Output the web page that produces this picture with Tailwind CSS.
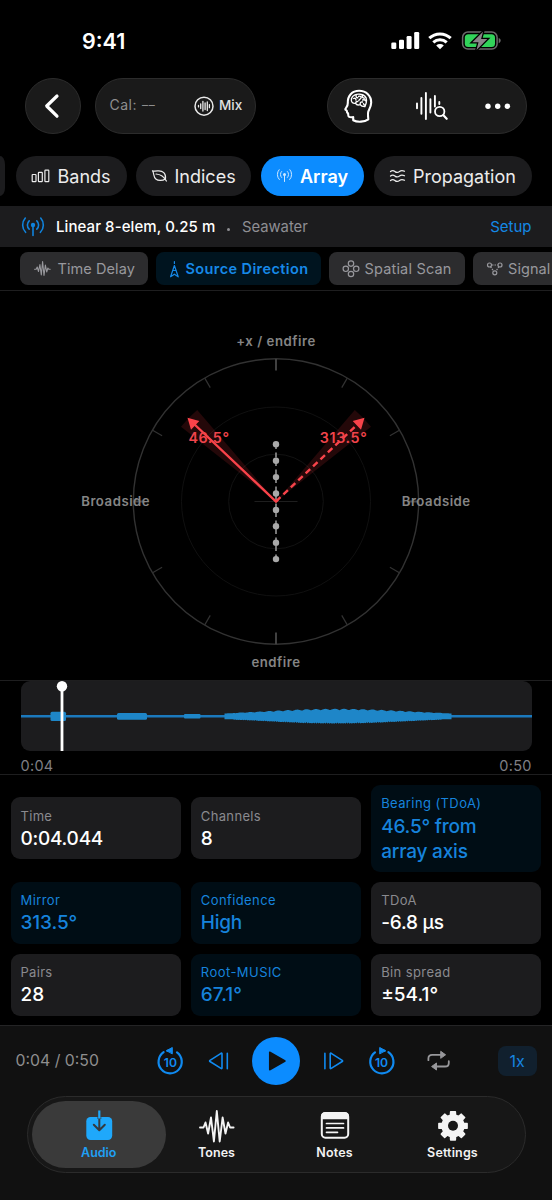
<!DOCTYPE html>
<html lang="en">
<head>
<meta charset="utf-8">
<title>Array analysis</title>
<script src="https://cdn.jsdelivr.net/npm/@tailwindcss/browser@4"></script>
</head>
<body class="bg-black">
<div class="w-[552px] h-[1200px] bg-black overflow-hidden flex flex-col font-['Inter',sans-serif] text-white whitespace-nowrap">

  <!-- Status bar -->
  <div class="h-[78px] shrink-0 flex items-start justify-between pl-[82px] pr-[50px]">
    <span class="mt-[27px] text-[21.5px] leading-7 font-semibold">9:41</span>
    <svg class="mt-[28px]" width="112" height="26" viewBox="390 28 112 26">
      <g fill="#fff">
        <rect x="391.3" y="42.5" width="5" height="6.5" rx="1.3"/><rect x="399" y="39.8" width="5" height="9.2" rx="1.3"/><rect x="406.6" y="36" width="5" height="13" rx="1.3"/><rect x="414.2" y="32" width="5" height="17" rx="1.3"/>
        <path d="M440 49.3l-3.8-3.8a5.6 5.6 0 0 1 7.6 0z"/>
      </g>
      <g fill="none" stroke="#fff" stroke-width="3">
        <path d="M433.3 42.3a9.8 9.8 0 0 1 13.4 0"/><path d="M429.3 38.2a15.5 15.5 0 0 1 21.4 0"/>
      </g>
      <rect x="462.6" y="32.1" width="34.5" height="17" rx="5.3" fill="none" stroke="#6b6b6b" stroke-width="1.5"/>
      <path d="M498.7 38v5.2c1.3-.5 2-1.4 2-2.6s-.7-2.1-2-2.6z" fill="#6b6b6b"/>
      <rect x="464.8" y="34.3" width="30.2" height="12.7" rx="3.5" fill="#32d35a"/>
      <path d="M483 31.7l-10.6 10.6h6.1l-2 7.6 10.8-10.8h-6.2z" fill="#8a8489" stroke="#000" stroke-width="2.6" paint-order="stroke"/>
    </svg>
  </div>

  <!-- Header -->
  <div class="h-[56px] shrink-0 flex pl-[25px]">
    <div class="w-[56px] h-[56px] rounded-full bg-[#1a1a1a] border border-[#2c2c2c] flex items-center justify-center">
      <svg width="18" height="28" viewBox="43.500 92 18 28"><path d="M56.5 96L46.2 106l10.3 10.2" fill="none" stroke="#fff" stroke-width="3.2" stroke-linecap="round" stroke-linejoin="round"/></svg>
    </div>
    <div class="ml-[14px] w-[161px] h-[56px] rounded-full bg-[#1a1a1a] border border-[#2c2c2c] flex items-center pl-[13.5px]">
      <span class="w-[84px] h-5 flex items-center text-[14px] leading-5 -mt-0.5 text-[#8e8e8e] tracking-[0.5px]">Cal:<span class="ml-[5px] text-[12px] tracking-[0.800px]">––</span></span>
      <svg width="20" height="20" viewBox="194 95.500 20 20" fill="none" stroke="#e9e9e9" stroke-linecap="round">
        <circle cx="204" cy="105.700" r="9" stroke-width="1.500"/>
        <path stroke-width="1.300" d="M198.500 105v1.400M200.700 103.300v4.800M202.900 100.800v9.800M205.100 102.500v6.600M207.300 101.300v8.800M209.400 104.200v3"/>
      </svg>
      <span class="ml-[5.500px] -mt-0.5 text-[13.500px] font-medium text-[#e0e0e0]">Mix</span>
    </div>
    <div class="ml-[71px] w-[200px] h-[56px] rounded-full bg-[#1a1a1a] border border-[#2c2c2c]">
      <svg width="198" height="54" viewBox="328 79 198 54" fill="none" stroke="#fff" stroke-linecap="round" stroke-linejoin="round">
        <path stroke-width="2.100" d="M353.200 120.300v-3.200c-1.300.2-3.100.3-4.100-.2-1.400-.7-.6-2.200-1-3.300-.3-.8-1.200-.8-1.100-1.700.1-.8-.1-1.200-.8-1.700-1.100-.6-1.100-1.200-.3-2.100 1.300-1.500 2-3 1.900-5.100-.3-7.300 4.200-12.200 11.300-12.200 7.300 0 12.100 5 12.100 11.700 0 3.600-1.400 6-2.700 8.500-.6 1.200-.4 6.500-.2 8.400-3.800 2.600-10.700 3.100-15.100.9z"/>
        <path stroke-width="1.400" d="M351.500 98.500c1-3.300 5.200-4.900 9-4.200 3.300.5 5.900 2.600 6 6 .1 2.300-.5 4-1.600 6.300-2.100.1-3.700-.5-4.800-2-1.800.7-3.700.2-4.500-1.300-2.500.4-5-.7-4.100-4.800zM353.600 98.500c1.500-.8 2.600.2 2.300 1.500M356.200 95.300c-.4 1.500.2 2.300 1.500 2.500M358.600 96.400c1.800-.8 3 .5 2.300 1.900-.5 1-2 1.200-2.100 2.400M362.300 95.800c-.3 1.400.7 2.200 2 2.400M360.300 104.300c-.6-1.500.6-2.700 2.200-2.300M362.700 100c1.200-.4 2.600.1 3.100.9M355.700 103.200c0-1.200.9-1.800 1.800-1.700M363.500 103.700c.2.800.8 1.500 1.400 1.700"/>
        <path stroke-width="1.900" d="M417 103.500v4.800M421.400 98v15.800M425.900 93v26M430.400 99.200v13.400M434.900 96v10.500M439.300 102v2"/>
        <circle cx="439.700" cy="111.500" r="4.700" stroke-width="1.800"/><path stroke-width="2.200" d="M443.400 115.300l3.300 3.500"/>
        <g fill="#fff" stroke="none"><circle cx="488" cy="106.200" r="2.700"/><circle cx="497.700" cy="106.200" r="2.700"/><circle cx="507.400" cy="106.200" r="2.700"/></g>
      </svg>
    </div>
  </div>

  <!-- Mode tabs -->
  <div class="mt-[22px] h-[40px] shrink-0 flex text-[18px] text-[#ececec]">
    <div class="w-[5px] h-[40px] bg-[#1c1c1e] rounded-r-[12px_50%]"></div>
    <div class="ml-[10.500px] w-[111px] rounded-full bg-[#1c1c1e] flex items-center pl-[15px]">
      <svg width="20" height="16" viewBox="31 168.500 20 16" fill="none" stroke="#ececec" stroke-width="1.200"><rect x="32.200" y="175" width="3.800" height="7.200" rx=".6"/><rect x="38.400" y="172.800" width="3.900" height="9.400" rx=".6"/><rect x="44.900" y="170.700" width="3.900" height="11.500" rx=".6"/></svg>
      <span class="ml-[7px]">Bands</span>
    </div>
    <div class="ml-[9.500px] w-[115px] rounded-full bg-[#1c1c1e] flex items-center pl-[15px]">
      <svg width="18" height="16" viewBox="151 168.500 18 16" fill="none" stroke="#ececec" stroke-width="1.200" stroke-linecap="round" stroke-linejoin="round"><path d="M152.500 171.300c1.500.4 3 .3 5 .1 5.500-.6 8.600 2.600 8 7.800-3 2.300-7.300 2.300-9.700.3-2.500-2.100-1.400-5.100-3.300-8.200zM156 174.500c3.700.3 7.700 2 10.400 7"/></svg>
      <span class="ml-[5.500px]">Indices</span>
    </div>
    <div class="ml-[10px] w-[103px] rounded-full bg-[#0c8cff] flex items-center pl-[15px] text-white font-semibold">
      <svg width="17" height="16" viewBox="276 168.500 17 16" fill="none" stroke="#fff" stroke-width="1" stroke-linecap="round" opacity=".8"><circle cx="284.500" cy="175" r="1.500" fill="#fff" stroke="none"/><path d="M284.500 175v7M281.600 178a4.200 4.200 0 0 1 0-6M287.400 178a4.200 4.200 0 0 0 0-6M279.300 180a7.200 7.200 0 0 1-.2-9.800M289.700 180a7.200 7.200 0 0 0 .2-9.800"/></svg>
      <span class="ml-[7px]">Array</span>
    </div>
    <div class="ml-[10px] w-[158px] rounded-full bg-[#1c1c1e] flex items-center pl-[15px]">
      <svg width="17" height="16" viewBox="389 168.500 17 16" fill="none" stroke="#ececec" stroke-width="1.200" stroke-linecap="round"><path d="M390.500 172c1.500-1.300 3-1.300 4.400 0s3 1.300 4.600 0 3-1.300 5-.2M390.500 176.500c1.500-1.300 3-1.300 4.400 0s3 1.300 4.600 0 3-1.300 5-.2M390.500 181c1.500-1.300 3-1.300 4.400 0s3 1.300 4.600 0 3-1.300 5-.2"/></svg>
      <span class="ml-[7px]">Propagation</span>
    </div>
  </div>

  <!-- Array setup -->
  <div class="mt-[10px] h-[41px] shrink-0 bg-[#1c1c1e] flex items-center pl-[21px] pr-[20.500px] text-[15px] pt-px">
    <svg width="24" height="24" viewBox="21 215 24 24" fill="none" stroke="#1083dc" stroke-width="1.600" stroke-linecap="round"><circle cx="33" cy="225" r="2.200" fill="#1083dc" stroke="none"/><path d="M33 226v9.500M29.200 229.200a5.800 5.800 0 0 1 0-8.400M36.800 229.200a5.800 5.800 0 0 0 0-8.400M25.600 232.300a10.600 10.600 0 0 1-.3-14.300M40.400 232.300a10.600 10.600 0 0 0 .3-14.300"/></svg>
    <span class="ml-[11px] font-medium tracking-[0.080px]">Linear 8-elem, 0.25 m</span>
    <span class="ml-[12px] size-[3px] rounded-full bg-[#8e8e93] mt-1"></span>
    <span class="ml-[11.500px] text-[14.800px] text-[#8e8e93]">Seawater</span>
    <span class="ml-auto text-[#1489e6]">Setup</span>
  </div>

  <!-- Analysis tabs -->
  <div class="h-[44px] shrink-0 border-b border-[#1e1e1f] flex items-start pt-[5px] pl-[20px] gap-[8px] text-[14.500px] text-[#98989d] tracking-[0.080px]">
    <div class="shrink-0 w-[128px] h-[33px] rounded-[8px] bg-[#2c2c2e] flex items-center pl-[14px]">
      <svg width="17" height="18" viewBox="34 260 17 18" fill="none" stroke="#98989d" stroke-width="1.100" stroke-linecap="round" stroke-linejoin="round"><path d="M34.600 269.200h1.600l1-2.200 1.300 4.500 1.400-7 1.400 10.500 1.300-13.500 1.400 14 1.400-10.500 1.300 7 1.200-4 .8 1.200h1.500"/></svg>
      <span class="ml-[6.500px]">Time Delay</span>
    </div>
    <div class="shrink-0 w-[165px] h-[33px] rounded-[8px] bg-[#00141f] flex items-center pl-[13px] text-[#1689e8] font-semibold tracking-[0.400px]">
      <svg width="11" height="18" viewBox="169 260 11 18" fill="none" stroke="#1689e8" stroke-width="1.200" stroke-linecap="round" stroke-linejoin="round"><path d="M174.400 261.500v2M174.400 265.500l-3.800 11.300 3.800-2.600 3.800 2.600zM172.900 270.500h3"/></svg>
      <span class="ml-[5.500px]">Source Direction</span>
    </div>
    <div class="shrink-0 w-[136px] h-[33px] rounded-[8px] bg-[#2c2c2e] flex items-center pl-[12.500px]">
      <svg width="18" height="18" viewBox="341 260 18 18" fill="none" stroke="#98989d" stroke-width="1.200"><circle cx="350" cy="263.600" r="2.700"/><circle cx="350" cy="274" r="2.700"/><circle cx="344.800" cy="268.800" r="2.700"/><circle cx="355.200" cy="268.800" r="2.700"/></svg>
      <span class="ml-[5px] tracking-[0.180px]">Spatial Scan</span>
    </div>
    <div class="shrink-0 w-[120px] h-[33px] rounded-[8px] bg-[#2c2c2e] flex items-center pl-[12.500px]">
      <svg width="17" height="16" viewBox="485 261 17 16" fill="none" stroke="#98989d" stroke-width="1.200"><circle cx="488.500" cy="265" r="2"/><circle cx="499" cy="265" r="2"/><circle cx="493.800" cy="272.800" r="2"/><path d="M491 265h5.500M489.600 266.800l3 4.300M497.900 266.800l-3 4.300" stroke-dasharray="1.500 1"/></svg>
      <span class="ml-[5.500px]">Signal</span>
    </div>
  </div>

  <!-- Direction plot -->
  <div class="h-[390px] shrink-0 border-b border-[#1e1e1f]">
  <svg class="block" width="552" height="389" viewBox="0 291 552 389" font-family="Inter, sans-serif">
    <g fill="none" stroke="#323232" stroke-width="1.400">
      <circle cx="276" cy="501.500" r="142.700"/>
      <circle cx="276" cy="501.500" r="94.500" stroke="#101010" stroke-width="1"/>
      <circle cx="276" cy="501.500" r="47.300" stroke="#121212" stroke-width="1"/>
      <path stroke="#1e1e1e" stroke-width="1" d="M254.500 501.500h43"/>
      <path stroke-width="1.900" stroke="#444" d="M276 359v11.500M276 644v-11.500M133.500 501.500H145M418.500 501.500H407"/>
      <path id="ticks" stroke-width="1.200"/>
    </g>
    <g font-size="13.200" font-weight="600" fill="#858585" text-anchor="middle" letter-spacing=".52">
      <text x="276" y="346">+x / endfire</text><text x="276" y="667">endfire</text>
      <text x="115.700" y="506.300">Broadside</text><text x="436.200" y="506.300">Broadside</text>
    </g>
    <path d="M276 444V559" stroke="#777" stroke-width="2" stroke-dasharray="5 3.500"/>
    <g fill="#a9a9a9"><circle cx="276" cy="444.300" r="3.200"/><circle cx="276" cy="460.700" r="3.200"/><circle cx="276" cy="477.100" r="3.200"/><circle cx="276" cy="493.500" r="3.200"/><circle cx="276" cy="509.900" r="3.200"/><circle cx="276" cy="526.300" r="3.200"/><circle cx="276" cy="542.700" r="3.200"/><circle cx="276" cy="559.100" r="3.200"/></g>
    <path d="M276 501.500L197.200 410A121 121 0 0 0 181 426.700zM276 501.500L354.800 410A121 121 0 0 1 371 426.700z" fill="#ff3b40" opacity=".14"/>
    <g stroke="#f9434a" stroke-width="2.400" fill="none"><path d="M193 423L276 501.500L278 499.600"/><path d="M276 501.500L359 423" stroke-dasharray="6.200 4"/></g>
    <path d="M187.500 417.800l11.800 3.200-8.300 8.800zM364.500 417.800l-11.800 3.200 8.300 8.800z" fill="#f9434a"/>
    <g font-size="14.300" font-weight="600" fill="#f0444b" text-anchor="middle" letter-spacing=".6"><text x="209" y="443">46.5°</text><text x="343.600" y="443">313.5°</text></g>
  </svg>
  </div>

  <!-- Waveform -->
  <div class="h-[94px] shrink-0 border-b border-[#1e1e1f] px-[20.500px]">
    <svg class="block rounded-[9px] bg-[#1c1c1e]" width="511" height="70" viewBox="20.500 681 511 70">
      <path d="M20.500 716.300h511" stroke="#1b79bd" stroke-width="2.500"/>
      <g fill="#1e86c8"><rect x="50" y="711.700" width="15.500" height="9.200" rx="1.500"/><rect x="116.500" y="712.900" width="30" height="6.800" rx="1.500"/><rect x="183.500" y="714" width="16.500" height="4.600" rx="1"/><path id="wave"/></g>
      <path d="M61.500 686v65" stroke="#fff" stroke-width="2.800"/><circle cx="61.500" cy="686.300" r="5.200" fill="#fff"/>
    </svg>
    <div class="flex justify-between mt-[5px] text-[14.500px] leading-5 text-[#7f7f84] tracking-[0.300px]"><span>0:04</span><span class="-mr-[0.300px]">0:50</span></div>
  </div>

  <!-- Readings -->
  <div class="h-[250px] shrink-0 grid grid-cols-3 items-center content-start gap-[10px] pt-[10px] px-[10.500px] text-[19px] leading-[25px] font-medium">
    <div class="h-[62px] mb-px rounded-[9px] bg-[#1c1c1e] pt-[10px] pl-[10px]"><div class="text-[13px] leading-[18px] mb-px font-normal text-[#8a8a8f] tracking-[0.300px]">Time</div><div class="tracking-[-0.250px]">0:04.044</div></div>
    <div class="h-[62px] mb-px rounded-[9px] bg-[#1c1c1e] pt-[10px] pl-[10px]"><div class="text-[13px] leading-[18px] mb-px font-normal text-[#8a8a8f] tracking-[0.350px]">Channels</div><div>8</div></div>
    <div class="h-[87px] rounded-[9px] bg-[#000d15] pt-[9px] pl-[10px] text-[#1683dc]"><div class="text-[13px] leading-[18px] mb-[2px] font-normal tracking-[0.400px]">Bearing (TDoA)</div><div class="tracking-[-0.200px]">46.5° from<br>array axis</div></div>
    <div class="h-[62px] rounded-[9px] bg-[#000d15] pt-[9px] pl-[10px] text-[#1683dc]"><div class="text-[13px] leading-[18px] mb-px font-normal tracking-[0.400px]">Mirror</div><div class="tracking-[-0.100px]">313.5°</div></div>
    <div class="h-[62px] rounded-[9px] bg-[#000d15] pt-[9px] pl-[10px] text-[#1683dc]"><div class="text-[13px] leading-[18px] mb-px font-normal tracking-[0.400px]">Confidence</div><div class="tracking-[-0.300px]">High</div></div>
    <div class="h-[62px] rounded-[9px] bg-[#1c1c1e] pt-[9px] pl-[10px]"><div class="text-[13px] leading-[18px] mb-px font-normal text-[#8a8a8f] tracking-[0.400px]">TDoA</div><div class="tracking-[-0.200px]">-6.8 µs</div></div>
    <div class="h-[62px] rounded-[9px] bg-[#1c1c1e] pt-[9px] pl-[10px]"><div class="text-[13px] leading-[18px] mb-px font-normal text-[#8a8a8f] tracking-[0.300px]">Pairs</div><div>28</div></div>
    <div class="h-[62px] rounded-[9px] bg-[#000d15] pt-[9px] pl-[10px] text-[#1683dc]"><div class="text-[13px] leading-[18px] mb-px font-normal tracking-[0.450px]">Root-MUSIC</div><div>67.1°</div></div>
    <div class="h-[62px] rounded-[9px] bg-[#1c1c1e] pt-[9px] pl-[10px]"><div class="text-[13px] leading-[18px] mb-px font-normal text-[#8a8a8f] tracking-[0.400px]">Bin spread</div><div>±54.1°</div></div>
  </div>

  <!-- Player and tab bar -->
  <div class="grow border-t border-[#242425] bg-[#111111]">
    <div class="h-[70px] flex items-center pl-[15.500px]">
      <span class="w-[134.500px] text-[15.800px] text-[#8e8e8e]">0:04 / 0:50</span>
      <svg width="310" height="70" viewBox="150 1026 310 70" fill="none" stroke="#108af0" stroke-linecap="round" stroke-linejoin="round" font-family="Inter, sans-serif">
        <g stroke-width="2.200"><path d="M163.600 1052.200A11.600 11.600 0 1 0 177 1052.400"/><path d="M171 1050.300c-1.500 0-2.500.1-3.600.5"/><path fill="#108af0" stroke-width="1" d="M166.800 1050.500l5.500-3v6z"/></g>
        <g stroke-width="2.200"><path d="M388.400 1052.200A11.600 11.600 0 1 1 375 1052.400"/><path d="M381 1050.300c1.500 0 2.500.1 3.600.5"/><path fill="#108af0" stroke-width="1" d="M385.200 1050.500l-5.500-3v6z"/></g>
        <g font-size="12.200" font-weight="600" fill="#108af0" stroke="none" text-anchor="middle"><text x="170.400" y="1067">10</text><text x="381.500" y="1067">10</text></g>
        <path stroke-width="1.600" d="M222 1053.800v14.200q0 1-1 .4L210 1061.500q-.8-.6 0-1.200l11-7q1-.5 1 .5zM227.300 1053.300v15.400M330.200 1053.800v14.200q0 1 1 .4L342.200 1061.500q.8-.6 0-1.200l-11-7q-1-.5-1 .5zM324.900 1053.300v15.400"/>
        <circle cx="276" cy="1061" r="24" fill="#0c8cff" stroke="none"/>
        <path fill="#111" stroke="#111" stroke-width="1.500" d="M269.700 1052.200v17.600l15.300-8.800z"/>
        <g stroke="#98989b" stroke-width="1.800"><path d="M428.400 1060.200v-1.700q0-3.700 3.700-3.700h10M448.800 1061.200v1.700q0 3.600-3.700 3.600h-10"/><path fill="#98989b" stroke-width="1" d="M441 1051.500l4.600 3.300-4.600 3.300zM436.200 1063.200l-4.600 3.300 4.600 3.300z"/></g>
      </svg>
      <div class="ml-[37.500px] w-[39px] h-[30px] rounded-[8px] bg-[#11202e] flex items-center justify-center text-[16px] text-[#1684e0]">1x</div>
    </div>
    <div class="ml-[26.500px] w-[499px] h-[77px] rounded-full border border-[#2b2b2b] bg-[#171717] p-[4px]">
      <div class="h-full flex text-[12.500px] leading-4 font-semibold text-center text-[#f2f2f2]">
        <div class="w-[134.500px] h-full rounded-full bg-[#3a3a3a] flex flex-col items-center pt-[8px] text-[#20a0f5]">
          <svg width="30" height="34" viewBox="84 1109 30 34"><path d="M90.500 1117h17.500a4.200 4.200 0 0 1 4.200 4.200v14.600a4.200 4.200 0 0 1-4.200 4.200H90.500a4.200 4.200 0 0 1-4.200-4.200v-14.600a4.200 4.200 0 0 1 4.200-4.200z" fill="#1fa8fb"/><path d="M99.300 1118v12M93.800 1124.800l5.500 5.500 5.500-5.500" fill="none" stroke="#343a40" stroke-width="2" stroke-linecap="round" stroke-linejoin="round"/><path d="M97.200 1116.500h4.200v2.500h-4.200z" fill="#3a3a3a" opacity=".6"/><path d="M99.300 1110.500v8" stroke="#1fa8fb" stroke-width="2.200"/></svg>
          <span class="mt-[1.500px]">Audio</span>
        </div>
        <div class="w-[101px] flex flex-col items-center pt-[8px]">
          <svg width="38" height="34" viewBox="197.500 1109 38 34" fill="none" stroke="#f4f4f4" stroke-width="1.900" stroke-linecap="round" stroke-linejoin="round"><path d="M199.500 1127.500h3.500l2-5 2.600 11 2.900-16 2.900 24 2.900-30.500 2.900 30.500 2.900-24 2.900 16 2.600-11 2 5h3.500"/></svg>
          <span class="mt-[1.500px]">Tones</span>
        </div>
        <div class="w-[135px] flex flex-col items-center pt-[8px]">
          <svg width="32" height="34" viewBox="318.500 1109 32 34"><rect x="321.300" y="1113.100" width="26.400" height="24.600" rx="3.600" fill="none" stroke="#f4f4f4" stroke-width="2"/><path d="M320.500 1119.300v-3a4 4 0 0 1 4-4h20a4 4 0 0 1 4 4v3z" fill="#f4f4f4"/><path d="M326 1123.500h17M326 1127.900h17M326 1132.300h11" stroke="#f4f4f4" stroke-width="1.700" stroke-linecap="round"/></svg>
          <span class="mt-[1.500px] tracking-[0.150px]">Notes</span>
        </div>
        <div class="w-[101px] flex flex-col items-center pt-[8px]">
          <svg width="34" height="34" viewBox="436 1109 34 34"><path id="gear" fill="#f4f4f4" stroke="#f4f4f4" stroke-width="1.500" stroke-linejoin="round"/><circle cx="453" cy="1125.800" r="5" fill="#171717"/></svg>
          <span class="mt-[1.500px] tracking-[0.150px]">Settings</span>
        </div>
      </div>
    </div>
  </div>
</div>
<script>
(() => {
  // Scale ticks every 30 degrees, leaving the four axis marks to the heavier path.
  let ticks = '';
  for (let a = 30; a < 360; a += 30) {
    if (a % 90 === 0) continue;
    const s = Math.sin(a * Math.PI / 180), c = Math.cos(a * Math.PI / 180);
    ticks += `M${276 + 142.5 * s} ${501.5 - 142.5 * c}L${276 + 131.5 * s} ${501.5 - 131.5 * c}`;
  }
  document.getElementById('ticks').setAttribute('d', ticks);

  // Envelope of the long call, with a little jitter on the edge.
  const upper = [], lower = [];
  for (let x = 224; x <= 451; x++) {
    const u = x < 335 ? (x - 224) / 111 : (451 - x) / 116;
    const h = 2.9 + 3.2 * Math.sin(u * Math.PI / 2) ** 1.5;
    const j = k => u < 0.08 ? 0 : Math.abs(Math.sin(x * k) * 1.4) * Math.min(1, u + 0.25);
    upper.push(`${x} ${716.3 - h - j(12.9)}`);
    lower.unshift(`${x} ${716.3 + h + j(7.7)}`);
  }
  document.getElementById('wave').setAttribute('d', 'M' + upper.concat(lower).join('L') + 'z');

  // Eight-toothed gear.
  const pts = [];
  for (let i = 0; i < 8; i++) {
    for (const [d, r] of [[-13.5, 11], [-9.5, 14.3], [9.5, 14.3], [13.5, 11]]) {
      const a = (i * 45 + d) * Math.PI / 180;
      pts.push(`${453 + r * Math.sin(a)} ${1125.8 - r * Math.cos(a)}`);
    }
  }
  document.getElementById('gear').setAttribute('d', 'M' + pts.join('L') + 'z');
})();
</script>
</body>
</html>
